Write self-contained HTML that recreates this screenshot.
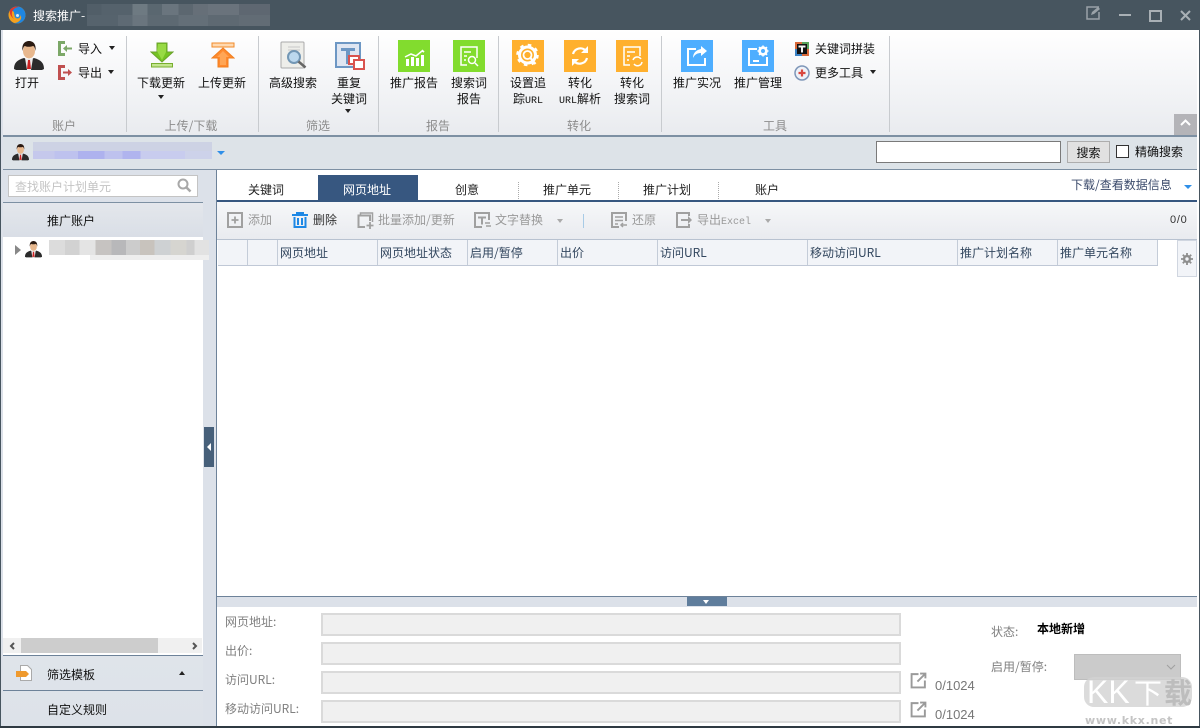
<!DOCTYPE html>
<html><head><meta charset="utf-8"><style>
html,body{margin:0;padding:0;width:1200px;height:728px;overflow:hidden;background:#fff}
body{position:relative;font:12px/16px "WenQuanYi Zen Hei","Noto Sans CJK SC","Liberation Sans",sans-serif;color:#111}
.a,.t,svg.i{position:absolute}
.t{white-space:nowrap;line-height:16px}
.c{text-align:center;transform:translateX(-50%)}
.g{color:#8c8c8c}
.d{color:#999}
.h{color:#33475f;top:245px}
.l{color:#808080;left:225px}
.m{font:10px/16px "Liberation Mono",monospace}
.in{position:absolute;left:321px;width:576px;height:19px;background:#f0f0f0;border:2px solid #dadada}
.sep{position:absolute;top:36px;width:1px;height:96px;background:#c8cbcf}
.hd{position:absolute;top:240px;height:25px;width:1px;background:#c4ccd8}
.dot{position:absolute;top:182px;height:17px;border-left:1px dotted #aaa}
.tri{position:absolute;width:0;height:0;border-left:3.5px solid transparent;border-right:3.5px solid transparent;border-top:4px solid #222}
.bl{position:absolute}
</style></head><body>
<svg width="0" height="0" style="position:absolute"><defs>
<symbol id="man" viewBox="0 0 30 30">
<path d="M0 28C0 22 3 19 10 17l5 2 5-2c7 2 10 5 10 11l-2 1H2z" fill="#2b2b2b"/>
<path d="M11 17l4 2 4-2-2 12h-4z" fill="#eee"/>
<path d="M14 19h2l1 9h-4z" fill="#c22"/>
<ellipse cx="15" cy="10" rx="6" ry="7.500" fill="#e8b88e"/>
<path d="M8.500 10C7.500 3 11 0 15 0s7.500 3 6.500 10c-.5-3-1.500-5-2.500-5-3 1-6 1-8 0-1 0-2 2-2.500 5z" fill="#2a1a12"/>
</symbol>
<symbol id="ext" viewBox="0 0 16 16"><path d="M8 2H1.500v12.500H14V8M7 9l7-7M9.500 1.500H14.500V6" fill="none" stroke="#9a9a9a" stroke-width="1.800"/></symbol>
</defs></svg>

<!-- title bar -->
<div class="a" style="left:0;top:0;width:1200px;height:30px;background:#47555f"></div>
<svg class="i" style="left:8px;top:6px" width="18" height="18" viewBox="0 0 18 18"><circle cx="9" cy="9" r="8.500" fill="#f4a11f"/><path d="M9 .5a8.500 8.500 0 0 1 8.500 8.500A8.500 8.500 0 0 1 6 17c4 0 8-3 7-7-1-3-5-4-7-1C7 4 3 5 1.500 5 3 2 6 .5 9 .5z" fill="#1f86e0"/><path d="M2 4c2-3 6-4 9-3-3 0-6 2-7 5-.5 2 0 5 2 7-3-2-5-6-4-9z" fill="#e2382b"/><circle cx="9.500" cy="9.500" r="3" fill="#2a8be0"/><circle cx="9.500" cy="9.500" r="1.500" fill="#d7e9f7"/></svg>
<div class="t" style="left:33px;top:8px;color:#fff">搜索推广-</div>
<div class="a" style="left:87px;top:4px;width:183px;height:11px;background:linear-gradient(90deg,#515e68 0 8%,#55626c 8% 25%,#6e7a82 25% 33%,#5a6770 33% 41%,#6a757e 41% 50%,#5c6770 50% 58%,#666f78 58% 66%,#6a737c 66% 83%,#5e6771 83% 100%)"></div>
<div class="a" style="left:87px;top:15px;width:183px;height:11px;background:linear-gradient(90deg,#56636d 0 17%,#5e6a74 17% 25%,#6a757e 25% 33%,#5d6972 33% 50%,#646f78 50% 66%,#5e6972 66% 83%,#626c75 83%)"></div>
<svg class="i" style="left:1086px;top:6px" width="15" height="14" viewBox="0 0 15 14"><path d="M13 1H1v12h12V6" fill="none" stroke="#9aa2a8" stroke-width="1.500"/><path d="M5 9l1-3 6-5 2 2-6 5z" fill="#9aa2a8"/></svg>
<div class="a" style="left:1119px;top:14px;width:12px;height:2px;background:#a9b0b5"></div>
<div class="a" style="left:1149px;top:10px;width:9px;height:8px;border:2px solid #a9b0b5"></div>
<svg class="i" style="left:1180px;top:10px" width="11" height="11" viewBox="0 0 11 11"><path d="M1 1l9 9M10 1l-9 9" stroke="#a9b0b5" stroke-width="2"/></svg>

<!-- frame -->
<div class="a" style="left:0;top:30px;width:3px;height:698px;background:#dce1e9;border-left:1px solid #47555f;box-sizing:border-box"></div>
<div class="a" style="left:1197px;top:30px;width:3px;height:698px;background:#fff;border-right:1px solid #47555f;box-sizing:border-box"></div>

<!-- ribbon -->
<div class="a" style="left:3px;top:30px;width:1194px;height:105px;background:linear-gradient(#fff,#e9ebef)"></div>
<div class="a" style="left:3px;top:135px;width:1194px;height:2px;background:#7d90a3"></div>
<div class="sep" style="left:126px"></div><div class="sep" style="left:258px"></div><div class="sep" style="left:378px"></div><div class="sep" style="left:498px"></div><div class="sep" style="left:661px"></div><div class="sep" style="left:889px"></div>
<div class="a" style="left:1174px;top:114px;width:23px;height:21px;background:#b4b4b8"></div>
<svg class="i" style="left:1180px;top:119px" width="11" height="7" viewBox="0 0 11 7"><path d="M1 6l4.500-4.500L10 6" fill="none" stroke="#fff" stroke-width="2"/></svg>

<svg class="i" style="left:14px;top:41px" width="30" height="30"><use href="#man"/></svg>
<div class="t c" style="left:27px;top:75px">打开</div>
<svg class="i" style="left:58px;top:41px" width="15" height="15" viewBox="0 0 15 15"><path d="M7 1.500H1.500v12H7" fill="none" stroke="#7ca868" stroke-width="3"/><path d="M14 6.500H9V4L5 7.500 9 11V8.500h5z" fill="#7ca868"/></svg>
<div class="t" style="left:78px;top:41px">导入</div><div class="tri" style="left:109px;top:46px"></div>
<svg class="i" style="left:58px;top:65px" width="15" height="15" viewBox="0 0 15 15"><path d="M7 1.500H1.500v12H7" fill="none" stroke="#c05050" stroke-width="3"/><path d="M5 6.500h5V4l4 3.500-4 3.500V8.500H5z" fill="#c05050"/></svg>
<div class="t" style="left:78px;top:65px">导出</div><div class="tri" style="left:108px;top:70px"></div>
<div class="t c g" style="left:64px;top:118px">账户</div>

<svg class="i" style="left:150px;top:42px" width="24" height="26" viewBox="0 0 24 26"><path d="M7 1h10v9h6L12 20 1 10h6z" fill="#74c322" stroke="#6aa22c"/><path d="M8 2h8v8l-4 8-5-9z" fill="#98da45"/><rect x="1.500" y="21.500" width="21" height="3.500" fill="#c3e58f" stroke="#78ae2f"/></svg>
<div class="t c" style="left:161px;top:75px">下载更新</div><div class="tri" style="left:158px;top:95px"></div>
<svg class="i" style="left:211px;top:42px" width="24" height="26" viewBox="0 0 24 26"><rect x="1" y="1" width="22" height="4" fill="#ffd9b0" stroke="#f08a2a"/><path d="M12 6l11 10h-6v9H7v-9H1z" fill="#ff8a2e" stroke="#f07f1f"/><path d="M12 9l-6 6h3v8h6v-8h3z" fill="#ffa656"/></svg>
<div class="t c" style="left:222px;top:75px">上传更新</div>
<div class="t c g" style="left:191px;top:118px">上传/下载</div>

<svg class="i" style="left:280px;top:41px" width="29" height="29" viewBox="0 0 29 29"><rect x="1" y="1" width="23" height="26" rx="1" fill="#eeeeea" stroke="#aaa"/><path d="M8 6h12M8 9h12" stroke="#c8c8c8"/><circle cx="14" cy="16" r="6" fill="#bcd8ee" stroke="#7397b5" stroke-width="2"/><path d="M18.500 20.500l7 6" stroke="#666" stroke-width="2.500"/></svg>
<div class="t c" style="left:293px;top:75px">高级搜索</div>
<svg class="i" style="left:335px;top:42px" width="30" height="29" viewBox="0 0 30 29"><rect x="1" y="1" width="24" height="24" fill="#dfe6f2" stroke="#6d97c4" stroke-width="2"/><path d="M6 6h14v3h-5v13h-4V9H6z" fill="#6d97c4"/><rect x="14" y="14" width="10" height="8" fill="#fff" stroke="#d9534f" stroke-width="2"/><rect x="19" y="18" width="10" height="9" fill="#fff" stroke="#d9534f" stroke-width="2"/></svg>
<div class="t c" style="left:349px;top:75px">重复</div><div class="t c" style="left:349px;top:91px">关键词</div><div class="tri" style="left:345px;top:109px"></div>
<div class="t c g" style="left:318px;top:118px">筛选</div>

<div class="bl" style="left:398px;top:40px;width:32px;height:32px;background:#82dc2e"></div>
<svg class="i" style="left:398px;top:40px" width="32" height="32" viewBox="0 0 32 32"><path d="M7 17l6-3 5 2 6-5 2 1-2-2" fill="none" stroke="#fff" stroke-width="1.500"/><path d="M8 19h3v7H8zM13 17h3v9h-3zM18 18h3v8h-3zM23 15h3v11h-3z" fill="#fff"/></svg>
<div class="t c" style="left:414px;top:75px">推广报告</div>
<div class="bl" style="left:453px;top:40px;width:32px;height:32px;background:#82dc2e"></div>
<svg class="i" style="left:453px;top:40px" width="32" height="32" viewBox="0 0 32 32"><path d="M14 25H8V7h16v11" fill="none" stroke="#fff" stroke-width="1.500"/><path d="M11 12h7M11 16h3M11 20h2" stroke="#fff" stroke-width="1.500"/><circle cx="19" cy="20" r="3.500" fill="none" stroke="#fff" stroke-width="1.500"/><path d="M22 23l3 3" stroke="#fff" stroke-width="1.500"/></svg>
<div class="t c" style="left:469px;top:75px">搜索词</div><div class="t c" style="left:469px;top:91px">报告</div>
<div class="t c g" style="left:438px;top:118px">报告</div>

<div class="bl" style="left:512px;top:40px;width:32px;height:32px;background:#ffb02e"></div>
<svg class="i" style="left:512px;top:40px" width="32" height="32" viewBox="0 0 32 32"><circle cx="15.500" cy="15" r="8" fill="none" stroke="#fff" stroke-width="3"/><circle cx="15.500" cy="15" r="10" fill="none" stroke="#fff" stroke-width="2.500" stroke-dasharray="3.500 4.350"/><circle cx="15.500" cy="15" r="4" fill="none" stroke="#fff" stroke-width="1.800"/><path d="M18.500 18l5 6" stroke="#fff" stroke-width="2.200"/></svg>
<div class="t c" style="left:528px;top:75px">设置追</div><div class="t c" style="left:528px;top:91px">踪<span class="m">URL</span></div>
<div class="bl" style="left:564px;top:40px;width:32px;height:32px;background:#ffb02e"></div>
<svg class="i" style="left:564px;top:40px" width="32" height="32" viewBox="0 0 32 32"><path d="M9 14a7.500 7.500 0 0 1 13-3M23 18a7.500 7.500 0 0 1-13 3" fill="none" stroke="#fff" stroke-width="2.200"/><path d="M24 6v7h-7zM8 26v-7h7z" fill="#fff"/></svg>
<div class="t c" style="left:580px;top:75px">转化</div><div class="t c" style="left:580px;top:91px"><span class="m">URL</span>解析</div>
<div class="bl" style="left:616px;top:40px;width:32px;height:32px;background:#ffb02e"></div>
<svg class="i" style="left:616px;top:40px" width="32" height="32" viewBox="0 0 32 32"><path d="M14 25H8V7h16v9" fill="none" stroke="#fff" stroke-width="1.500"/><path d="M11 12h8M11 16h3M11 20h2" stroke="#fff" stroke-width="1.500"/><path d="M17 20a4.500 4.500 0 0 1 8-1M26 22a4.500 4.500 0 0 1-8 2" fill="none" stroke="#fff" stroke-width="1.500"/></svg>
<div class="t c" style="left:632px;top:75px">转化</div><div class="t c" style="left:632px;top:91px">搜索词</div>
<div class="t c g" style="left:579px;top:118px">转化</div>

<div class="bl" style="left:681px;top:40px;width:32px;height:32px;background:#4eaeff"></div>
<svg class="i" style="left:681px;top:40px" width="32" height="32" viewBox="0 0 32 32"><path d="M15 9H7v16h17v-7" fill="none" stroke="#fff" stroke-width="2"/><path d="M20 6l6 5-6 5v-3c-3 0-6 1-8 5 0-5 3-8 8-9z" fill="#fff"/></svg>
<div class="t c" style="left:697px;top:75px">推广实况</div>
<div class="bl" style="left:742px;top:40px;width:32px;height:32px;background:#4eaeff"></div>
<svg class="i" style="left:742px;top:40px" width="32" height="32" viewBox="0 0 32 32"><path d="M15 9H7v16h18v-8" fill="none" stroke="#fff" stroke-width="2"/><path d="M11 21h6" stroke="#fff" stroke-width="2"/><circle cx="21" cy="11" r="3.500" fill="none" stroke="#fff" stroke-width="2.500"/><path d="M21 5.500v11M15.500 11h11M17 7l8 8M25 7l-8 8" stroke="#fff" stroke-width="1.500"/><circle cx="21" cy="11" r="2" fill="#4eaeff"/></svg>
<div class="t c" style="left:758px;top:75px">推广管理</div>
<svg class="i" style="left:795px;top:42px" width="14" height="14" viewBox="0 0 14 14"><rect width="14" height="14" fill="#d9693a"/><rect x="7" width="7" height="7" fill="#5aa35a"/><rect y="7" width="7" height="7" fill="#3b82c4"/><rect x="2" y="2" width="10" height="10" fill="#111"/><path d="M3.500 3.500h7v2h-2.500v5H6v-5H3.500z" fill="#f5f5f5"/></svg>
<div class="t" style="left:815px;top:41px">关键词拼装</div>
<svg class="i" style="left:794px;top:65px" width="16" height="16" viewBox="0 0 16 16"><circle cx="8" cy="8" r="7" fill="#eef2f8" stroke="#7e96b8" stroke-width="1.500"/><path d="M8 4.500v7M4.500 8h7" stroke="#d9483f" stroke-width="2.200"/></svg>
<div class="t" style="left:815px;top:65px">更多工具</div><div class="tri" style="left:870px;top:70px"></div>
<div class="t c g" style="left:775px;top:118px">工具</div>

<!-- account bar -->
<div class="a" style="left:3px;top:137px;width:1194px;height:32px;background:#dde3e8;border-bottom:1px solid #7d90a3;box-sizing:content-box"></div>
<svg class="i" style="left:12px;top:144px" width="17" height="17"><use href="#man"/></svg>
<div class="a" style="left:33px;top:142px;width:179px;height:9px;background:#cdd2e4"></div>
<div class="a" style="left:33px;top:151px;width:179px;height:8px;background:linear-gradient(90deg,#c5c8ec 0 12%,#bec2ee 12% 25%,#aeb2ee 25% 40%,#bec2ee 40% 50%,#b0b4ee 50% 60%,#c8ccee 60% 85%,#cdd2ea 85%)"></div>
<div class="tri" style="left:217px;top:151px;border-top-color:#2f8fe8;border-left-width:4px;border-right-width:4px"></div>
<div class="a" style="left:876px;top:141px;width:183px;height:20px;background:#fff;border:1px solid #7a7a7a"></div>
<div class="a" style="left:1067px;top:141px;width:41px;height:20px;line-height:22px;text-align:center;background:#e1e1e1;border:1px solid #adadad">搜索</div>
<div class="a" style="left:1116px;top:145px;width:11px;height:11px;background:#fff;border:1px solid #333"></div>
<div class="t" style="left:1135px;top:144px">精确搜索</div>

<!-- left panel -->
<div class="a" style="left:3px;top:170px;width:200px;height:556px;background:#fff"></div>
<div class="a" style="left:3px;top:170px;width:200px;height:33px;background:#dce1e9"></div>
<div class="a" style="left:203px;top:170px;width:13px;height:556px;background:#dce1e9"></div>
<div class="a" style="left:216px;top:170px;width:1px;height:556px;background:#6d8299"></div>
<div class="a" style="left:204px;top:427px;width:10px;height:40px;background:#47607a"></div>
<div class="a" style="left:207px;top:443px;border-top:4px solid transparent;border-bottom:4px solid transparent;border-right:4px solid #fff"></div>
<div class="a" style="left:8px;top:175px;width:188px;height:20px;background:#fff;border:1px solid #c4c4c4"></div>
<div class="t" style="left:15px;top:179px;color:#c4c4c4">查找账户计划单元</div>
<svg class="i" style="left:177px;top:178px" width="15" height="15" viewBox="0 0 15 15"><circle cx="6" cy="6" r="4.500" fill="none" stroke="#a8a8a8" stroke-width="2"/><path d="M9.500 9.500l4 4" stroke="#a8a8a8" stroke-width="2.500"/></svg>
<div class="a" style="left:3px;top:202px;width:200px;height:35px;background:linear-gradient(#e4e7ec,#d9dee6);border-top:1px solid #7d90a3;box-sizing:border-box"></div>
<div class="t" style="left:47px;top:213px">推广账户</div>
<div class="a" style="left:15px;top:245px;border-top:5px solid transparent;border-bottom:5px solid transparent;border-left:6px solid #888"></div>
<svg class="i" style="left:25px;top:241px" width="17" height="17"><use href="#man"/></svg>
<div class="a" style="left:49px;top:240px;width:160px;height:15px;background:linear-gradient(90deg,#dcdcdc 0 10%,#d2d2d2 10% 19%,#e4e4e4 19% 29%,#c6c3c1 29% 39%,#b8b8ba 39% 48%,#cccccc 48% 57%,#c8c3bd 57% 66%,#ced1d3 66% 76%,#d6d5d0 76% 86%,#cfcfcf 86% 91%,#e2e2e2 91%)"></div>
<div class="a" style="left:90px;top:255px;width:119px;height:5px;background:#eeeeee"></div>
<!-- scrollbar -->
<div class="a" style="left:3px;top:638px;width:199px;height:15px;background:#f0f0f0"></div>
<div class="a" style="left:21px;top:638px;width:137px;height:15px;background:#cdcdcd"></div>
<svg class="i" style="left:9px;top:642px" width="7" height="8" viewBox="0 0 7 8"><path d="M5 1L2 4l3 3" fill="none" stroke="#555" stroke-width="2"/></svg>
<svg class="i" style="left:191px;top:642px" width="7" height="8" viewBox="0 0 7 8"><path d="M2 1l3 3-3 3" fill="none" stroke="#555" stroke-width="2"/></svg>
<div class="a" style="left:3px;top:655px;width:200px;height:71px;background:linear-gradient(#dfe4ea,#dde2e9)"></div>
<div class="a" style="left:3px;top:655px;width:200px;height:1px;background:#6d8299"></div>
<div class="a" style="left:3px;top:690px;width:200px;height:1px;background:#6d8299"></div>
<svg class="i" style="left:16px;top:664px" width="17" height="17" viewBox="0 0 17 17"><path d="M4.500 1.500h7l4 4v11h-11z" fill="#fff" stroke="#aaa"/><path d="M0 7h10l3 3-3 3H0z" fill="#ef9a2e"/></svg>
<div class="t" style="left:47px;top:667px">筛选模板</div>
<div class="tri" style="left:179px;top:671px;border-top:0;border-bottom:4px solid #222"></div>
<div class="t" style="left:47px;top:702px">自定义规则</div>

<!-- tabs -->
<div class="a" style="left:318px;top:175px;width:100px;height:25px;background:#375780"></div>
<div class="a" style="left:217px;top:200px;width:980px;height:2px;background:#375780"></div>
<div class="t c" style="left:266px;top:182px;color:#222">关键词</div>
<div class="t c" style="left:367px;top:182px;color:#fff">网页地址</div>
<div class="t c" style="left:467px;top:182px;color:#222">创意</div>
<div class="t c" style="left:567px;top:182px;color:#222">推广单元</div>
<div class="t c" style="left:667px;top:182px;color:#222">推广计划</div>
<div class="t c" style="left:767px;top:182px;color:#222">账户</div>
<div class="dot" style="left:518px"></div><div class="dot" style="left:618px"></div><div class="dot" style="left:718px"></div>
<div class="t" style="left:1071px;top:177px;color:#3b4a6b">下载/查看数据信息</div>
<div class="tri" style="left:1184px;top:185px;border-top-color:#2f8fe8;border-left-width:4px;border-right-width:4px"></div>

<!-- toolbar -->
<div class="a" style="left:217px;top:202px;width:980px;height:37px;background:linear-gradient(#f6f7f9,#e9ebef)"></div>
<div class="a" style="left:217px;top:239px;width:980px;height:1px;background:#b8c2d0"></div>
<svg class="i" style="left:227px;top:212px" width="16" height="16" viewBox="0 0 16 16"><rect x="1" y="1" width="14" height="14" fill="none" stroke="#a0a0a0" stroke-width="2"/><path d="M8 4.500v7M4.500 8h7" stroke="#a0a0a0" stroke-width="1.800"/></svg>
<div class="t d" style="left:248px;top:212px">添加</div>
<svg class="i" style="left:292px;top:212px" width="16" height="16" viewBox="0 0 16 16"><path d="M0 3h16M5 3V1h6v2" fill="none" stroke="#1e88e5" stroke-width="2"/><path d="M2.500 5v10h11V5M6 6v7M10 6v7" fill="none" stroke="#1e88e5" stroke-width="2"/></svg>
<div class="t" style="left:313px;top:212px;color:#333">删除</div>
<svg class="i" style="left:357px;top:212px" width="17" height="17" viewBox="0 0 17 17"><path d="M3.500 3V1h12v9" fill="none" stroke="#a0a0a0" stroke-width="1.500"/><path d="M8 15H1.500V3.500H13V9" fill="none" stroke="#a0a0a0" stroke-width="2"/><path d="M13 10v7M9.500 13.500h7" stroke="#a0a0a0" stroke-width="1.800"/></svg>
<div class="t d" style="left:378px;top:212px">批量添加/更新</div>
<svg class="i" style="left:474px;top:212px" width="17" height="16" viewBox="0 0 17 16"><path d="M8 15H1V1h14v7" fill="none" stroke="#a0a0a0" stroke-width="2"/><path d="M4 4.500h8v2H9v6H7v-6H4z" fill="#a0a0a0"/><path d="M11 11h5M12 14h5" stroke="#a0a0a0" stroke-width="1.500"/></svg>
<div class="t d" style="left:495px;top:212px">文字替换</div>
<div class="tri" style="left:557px;top:219px;border-top-color:#aaa"></div>
<div class="a" style="left:583px;top:214px;width:1px;height:14px;background:#a8cbe6"></div>
<svg class="i" style="left:611px;top:212px" width="17" height="16" viewBox="0 0 17 16"><path d="M8 15H1V1h14v8" fill="none" stroke="#a0a0a0" stroke-width="2"/><path d="M4 5h8M4 8.500h8M4 12h3" stroke="#a0a0a0" stroke-width="1.500"/><path d="M10 13h6M12 11l-2 2 2 2" fill="none" stroke="#a0a0a0" stroke-width="1.500"/></svg>
<div class="t d" style="left:632px;top:212px">还原</div>
<svg class="i" style="left:676px;top:212px" width="17" height="16" viewBox="0 0 17 16"><path d="M13 4V1H1v14h12v-3" fill="none" stroke="#a0a0a0" stroke-width="2"/><path d="M5 7h7V4l4 4-4 4V9H5z" fill="#a0a0a0"/></svg>
<div class="t d" style="left:697px;top:212px">导出<span class="m" style="color:#999">Excel</span></div>
<div class="tri" style="left:765px;top:219px;border-top-color:#aaa"></div>
<div class="t" style="left:1170px;top:212px;color:#333;font:11px/16px 'Liberation Sans',sans-serif;letter-spacing:.7px">0/0</div>

<!-- table header -->
<div class="a" style="left:218px;top:240px;width:940px;height:25px;background:#f2f4f8;border-bottom:1px solid #c0c8d6"></div>
<div class="hd" style="left:247px"></div><div class="hd" style="left:277px"></div><div class="hd" style="left:377px"></div><div class="hd" style="left:467px"></div><div class="hd" style="left:557px"></div><div class="hd" style="left:657px"></div><div class="hd" style="left:807px"></div><div class="hd" style="left:957px"></div><div class="hd" style="left:1057px"></div><div class="hd" style="left:1157px"></div>
<div class="t h" style="left:280px">网页地址</div>
<div class="t h" style="left:380px">网页地址状态</div>
<div class="t h" style="left:470px">启用/暂停</div>
<div class="t h" style="left:560px">出价</div>
<div class="t h" style="left:660px">访问URL</div>
<div class="t h" style="left:810px">移动访问URL</div>
<div class="t h" style="left:960px">推广计划名称</div>
<div class="t h" style="left:1060px">推广单元名称</div>
<div class="a" style="left:1177px;top:240px;width:18px;height:35px;background:#f2f4f8;border:1px solid #d0d6e0"></div>
<svg class="i" style="left:1181px;top:253px" width="12" height="12" viewBox="0 0 12 12"><circle cx="6" cy="6" r="3" fill="none" stroke="#8e8e8e" stroke-width="2.200"/><path d="M6 0v12M0 6h12M1.800 1.800l8.400 8.400M10.200 1.800l-8.400 8.400" stroke="#8e8e8e" stroke-width="1.800"/><circle cx="6" cy="6" r="1.700" fill="#f2f4f8"/></svg>

<!-- bottom pane -->
<div class="a" style="left:217px;top:596px;width:980px;height:1px;background:#6d8299"></div>
<div class="a" style="left:217px;top:597px;width:980px;height:10px;background:#dce1e9"></div>
<div class="a" style="left:687px;top:597px;width:40px;height:9px;background:#5f7d9c"></div>
<div class="tri" style="left:703px;top:600px;border-top-color:#fff"></div>
<div class="t l" style="top:614px">网页地址:</div>
<div class="t l" style="top:643px">出价:</div>
<div class="t l" style="top:672px">访问URL:</div>
<div class="t l" style="top:701px">移动访问URL:</div>
<div class="in" style="top:613px"></div><div class="in" style="top:642px"></div><div class="in" style="top:671px"></div><div class="in" style="top:700px"></div>
<svg class="i" style="left:910px;top:672px" width="17" height="17"><use href="#ext"/></svg>
<svg class="i" style="left:910px;top:701px" width="17" height="17"><use href="#ext"/></svg>
<div class="t" style="left:935px;top:678px;color:#777;font-family:'Liberation Sans',sans-serif;font-size:13px">0/1024</div>
<div class="t" style="left:935px;top:707px;color:#777;font-family:'Liberation Sans',sans-serif;font-size:13px">0/1024</div>
<div class="t l" style="left:991px;top:624px">状态:</div>
<div class="t" style="left:1037px;top:621px;font-weight:bold;color:#000">本地新增</div>
<div class="t l" style="left:991px;top:659px">启用/暂停:</div>
<div class="a" style="left:1074px;top:654px;width:105px;height:24px;background:#cbcbcb;border:1px solid #bdbdbd"></div>
<svg class="i" style="left:1166px;top:664px" width="10" height="6" viewBox="0 0 10 6"><path d="M1 1l4 4 4-4" fill="none" stroke="#a0a0a0"/></svg>

<!-- watermark -->
<div class="a" style="left:1084px;top:677px;width:108px;height:30px;background:#d2d2d2;border-radius:10px;opacity:.8"></div>
<div class="t" style="left:1087px;top:674px;font:normal 32px/36px 'Liberation Sans',sans-serif;color:#fff">KK</div>
<div class="t" style="left:1134px;top:676px;font:normal 28px/32px 'Noto Sans CJK SC',sans-serif;color:#fff">下</div>
<div class="t" style="left:1164px;top:676px;font:bold 28px/32px 'Noto Sans CJK SC',sans-serif;color:#bdbdbd">载</div>
<div class="t" style="left:1085px;top:714px;font:bold 11px/13px 'DejaVu Sans',sans-serif;color:#c4c4c4;letter-spacing:.7px">www.kkx.net</div>

<!-- bottom border -->
<div class="a" style="left:0;top:726px;width:1200px;height:2px;background:#2f3a42"></div>
</body></html>
